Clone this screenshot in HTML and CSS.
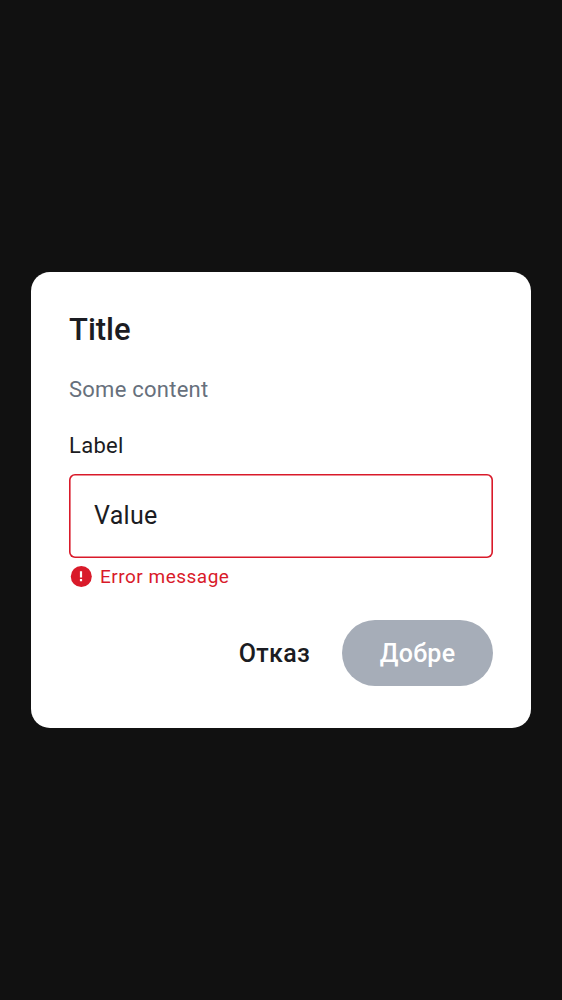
FILE: index.html
```html
<!DOCTYPE html>
<html lang="bg">
<head>
<meta charset="utf-8">
<title>Title</title>
<link rel="stylesheet" href="styles.css">
</head>
<body>
<main class="dialog" role="dialog">
  <h1 class="title">Title</h1>
  <p class="content">Some content</p>
  <label class="label" for="value">Label</label>
  <div class="field" id="value">Value</div>
  <div class="error">
    <svg class="error-icon" viewBox="0 0 25 25"><circle cx="12.300" cy="12.500" r="10.500" fill="#d91a2a"/><path d="M12 7.200v6.300M12 15v2.200" stroke="#fff" stroke-width="2.200"/></svg>
    <span class="error-text">Error message</span>
  </div>
  <div class="actions">
    <button class="button cancel">Отказ</button>
    <button class="button confirm">Добре</button>
  </div>
</main>
</body>
</html>
```
FILE: styles.css
```css
* { box-sizing: border-box; }
body {
  margin: 0;
  height: 1000px;
  display: flex;
  align-items: center;
  justify-content: center;
  background: #111111;
  font-family: Roboto, sans-serif;
  color: #1b1c22;
}
.dialog {
  width: 500px;
  height: 456px;
  padding: 39px 38px 42px;
  border-radius: 19px;
  background: #fff;
}
.title { margin: 0; font-size: 31px; line-height: 38px; font-weight: 500; }
.content { margin: 25px 0 0; font-size: 22px; line-height: 31px; letter-spacing: 0.25px; color: #67707c; }
.label { display: block; margin-top: 25px; font-size: 22px; line-height: 31px; letter-spacing: 0.3px; }
.field {
  height: 84px;
  margin-top: 12.500px;
  padding-left: 25px;
  border-radius: 6px;
  box-shadow: inset 0 0 0 1.600px #d91a2a;
  font-size: 25px;
  line-height: 84px;
  letter-spacing: 0.3px;
}
.error { display: flex; align-items: center; height: 26px; margin-top: 5.500px; color: #d91a2a; }
.error-icon { width: 25px; height: 25px; }
.error-text { margin-left: 6px; font-size: 19px; letter-spacing: 0.5px; }
.actions { display: flex; justify-content: flex-end; margin-top: 31px; }
.button {
  height: 66px;
  border: 0;
  border-radius: 33px;
  background: none;
  color: inherit;
  font: 500 25px/66px Roboto, sans-serif;
  letter-spacing: 0.3px;
  padding: 1px 0 0;
}
.cancel { margin-right: 32px; }
.confirm { width: 151px; background: #a6adb8; color: #fff; }
```
